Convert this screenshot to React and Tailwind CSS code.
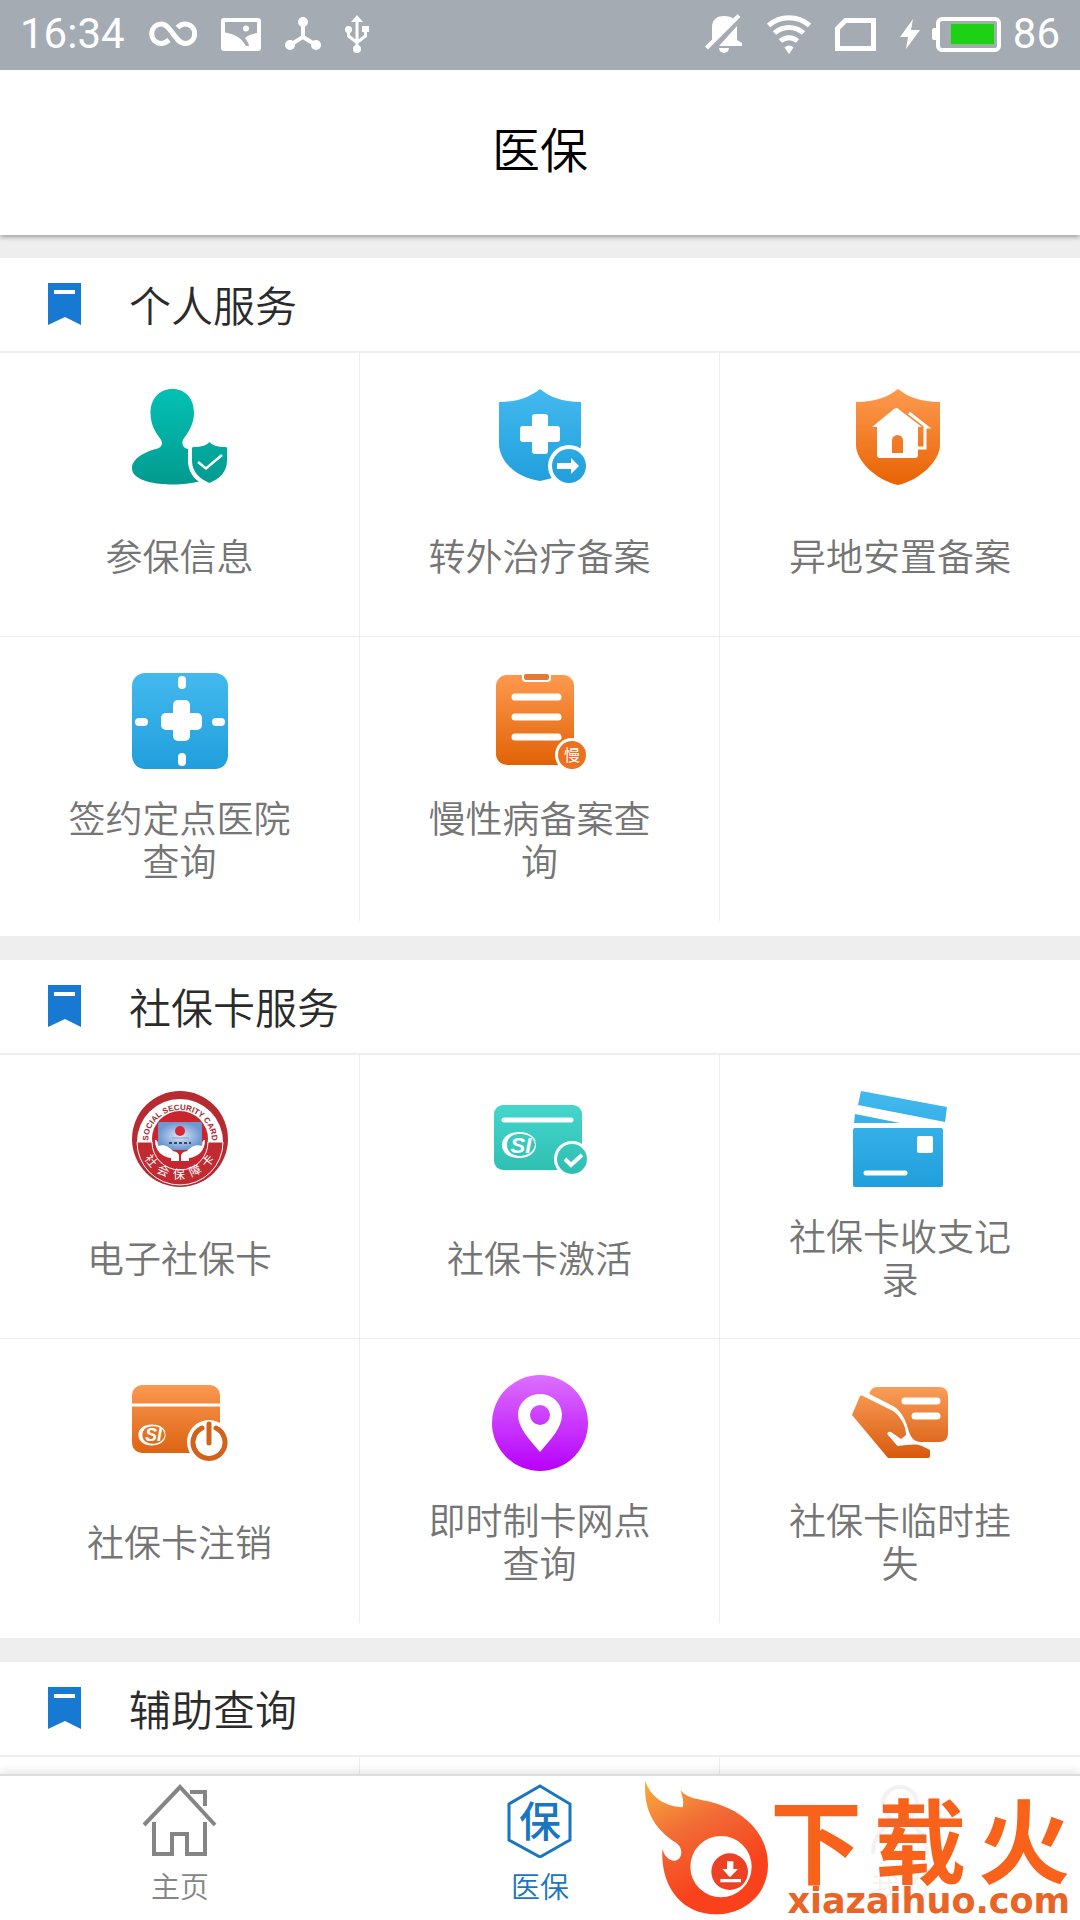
import { useState } from "react";

const SANS = "font-['Noto_Sans_CJK_SC',sans-serif]";

function StatusBar() {
  return (
    <div className="relative z-20 flex h-[70px] shrink-0 items-center justify-between bg-[#a4abb3] px-5 pb-0.5 font-[Roboto,sans-serif] text-[42px] leading-none text-white">
      <div className="flex items-center gap-6">
        <span>16:34</span>
        <svg width="48" height="26" viewBox="0 0 48 26" fill="none" stroke="currentColor" strokeWidth="5">
          <path d="M20 19C17 21.5 15 22.5 12.5 22.5A9.7 9.7 0 0 1 12.5 3C22 3 26 22.5 36 22.5A9.7 9.7 0 0 0 36 3C33 3 31 4 28.500 6.500" />
        </svg>
        <svg width="40" height="33" viewBox="0 0 40 33" fill="currentColor">
          <path fillRule="evenodd" d="M3 0H37Q40 0 40 3V30Q40 33 37 33H3Q0 33 0 30V3Q0 0 3 0ZM4 4V14.500C13 16 21 20 25 28H28C27.500 24 25 22 24 20C27 17 31 16 36 15V4ZM25 7.500A3 3 0 1 0 25 13.500A3 3 0 1 0 25 7.500Z" />
        </svg>
        <svg width="36" height="34" viewBox="0 0 36 34" fill="currentColor">
          <path d="M18 5V20L5 28M18 20L31 28" fill="none" stroke="currentColor" strokeWidth="4" />
          <circle cx="18" cy="5" r="5" />
          <circle cx="5" cy="28" r="5" />
          <circle cx="31" cy="28" r="5" />
        </svg>
        <svg width="24" height="38" viewBox="0 0 24 38" fill="currentColor">
          <path d="M12 4V34M3.500 14V21L12 27.500L20.500 21V14" fill="none" stroke="currentColor" strokeWidth="3" />
          <path d="M12 0L18 7H6Z" />
          <rect x="17" y="11" width="7" height="6" />
          <circle cx="3.500" cy="14.500" r="3.500" />
          <circle cx="12" cy="34" r="4" />
        </svg>
      </div>
      <div className="flex items-center gap-6">
        <svg width="38" height="40" viewBox="0 0 38 40" fill="currentColor">
          <path d="M7 27V13C7 5 13 2 19 2C23 2 27 3 29 5ZM14 32L32 12V26L37 29V32ZM14 34H24A5 5 0 0 1 14 34Z" />
          <path d="M1.500 34L34 1.500" stroke="currentColor" strokeWidth="4" />
        </svg>
        <svg width="44" height="39" viewBox="0 0 44 39" fill="none" stroke="currentColor" strokeWidth="5">
          <path d="M1.500 10.500C13 0 31 0 42.500 10.500M7.500 18C16 10.500 28 10.500 36.500 18M13.500 26C18.500 21.500 25.500 21.500 30.500 26" />
          <path d="M22 39L17.500 32.500Q22 28.500 26.500 32.500Z" fill="currentColor" stroke="none" />
        </svg>
        <svg width="41" height="33" viewBox="0 0 41 33" fill="none" stroke="currentColor" strokeWidth="5">
          <path d="M10.500 2.500H38.500V30.500H2.500V10.500Z" />
        </svg>
        <div className="flex items-center gap-3">
          <svg width="20" height="30" viewBox="0 0 20 30" fill="currentColor">
            <path d="M13 0L0 18H8L6 30L20 11H11Z" />
          </svg>
          <svg width="69" height="35" viewBox="0 0 69 35">
            <path d="M5 11H2Q0 11 0 13V21Q0 23 2 23H5Z" fill="#fff" />
            <rect x="6" y="2" width="61" height="31" rx="4" fill="none" stroke="#fff" strokeWidth="4" />
            <rect x="18" y="6" width="45" height="23" fill="#8fb896" />
            <rect x="19" y="7" width="43" height="20" fill="#1fd114" />
          </svg>
          <span>86</span>
        </div>
      </div>
    </div>
  );
}

// Vertical two-stop fill shared by the service icons
function Fade({ id, from, to }) {
  return (
    <defs>
      <linearGradient id={id} x1="0" y1="0" x2="0" y2="96" gradientUnits="userSpaceOnUse">
        <stop offset="0" stopColor={from} />
        <stop offset="1" stopColor={to} />
      </linearGradient>
    </defs>
  );
}

function Icon({ children }) {
  return (
    <svg className="size-24 shrink-0" viewBox="0 0 96 96" aria-hidden="true">
      {children}
    </svg>
  );
}

function SiMark() {
  return (
    <>
      <path fillRule="evenodd" fill="#fff" d="M0-13C10-13 16-8 17-3C13-9 7-11 1-11C-8-11-12-6-12 0C-12 6-8 10 0 11C8 11 15 7 16 0C15-4 14-6 12-8C16-5 17-2 17 1C16 9 9 13 0 13C-10 13-17 8-17 0C-17-8-10-13 0-13Z" />
      <text x="2" y="8" textAnchor="middle" fill="#fff" className="font-['Liberation_Sans',sans-serif] font-bold italic" fontSize="22">SI</text>
    </>
  );
}

function InsuredIcon() {
  return (
    <Icon>
      <Fade id="insured" from="#02c1b4" to="#039a8f" />
      <g fill="url(#insured)">
        <path d="M40.500 0C54 0 62 10 62 24C62 35 56 44 51.500 50C49 54 51 58 54 59.500L56 60V72C56 82 62 90 67 92.500C58 95 46 95.500 38 95.500C20 95 0 91 0 79C0 70 12 63 24 60C31 58 31 54 28.500 50C23 43 18.500 35 18.500 24C18.500 10 27 0 40.500 0Z" />
        <path d="M77.500 53C80 56 85 58 94 58L95 59V72C95 83 87 90 77.500 94C68 90 60 83 60 72V59L61 58C70 58 75 56 77.500 53Z" />
      </g>
      <path d="M66 73L74 79.500L90 66" fill="none" stroke="#fff" strokeWidth="2.500" />
    </Icon>
  );
}

function TransferIcon() {
  return (
    <Icon>
      <Fade id="transfer" from="#43b9ee" to="#209fdc" />
      <path d="M48 0C58 8 70 13 89 13V54C89 73 72 88 48 92C24 88 7 73 7 54V13C26 13 38 8 48 0Z" fill="url(#transfer)" />
      <path d="M43 25H53Q56 25 56 28V37H65Q68 37 68 40V50Q68 53 65 53H56V62Q56 65 53 65H43Q40 65 40 62V53H31Q28 53 28 50V40Q28 37 31 37H40V28Q40 25 43 25Z" fill="#fff" />
      <circle cx="77" cy="77" r="21" fill="#fff" />
      <circle cx="77" cy="77" r="17" fill="url(#transfer)" />
      <path d="M65 74H79V69L87 77L79 85V80H65Z" fill="#fff" />
    </Icon>
  );
}

function RelocateIcon() {
  return (
    <Icon>
      <Fade id="relocate" from="#fe9a50" to="#e86303" />
      <path d="M46 0C56 8 69 13 88 13V56C88 72 68 91 46 96C24 91 4 72 4 56V13C23 13 36 8 46 0Z" fill="url(#relocate)" />
      <path d="M45 19L70 38H66V66Q66 69 63 69H28Q25 69 25 66V38H20L42 20Q45 18 48 20Z" fill="#fff" />
      <path d="M57 24L75 38H73V59H66" fill="none" stroke="#fff" strokeWidth="3" />
      <path d="M40 64V51.500A5.500 5.500 0 0 1 51 51.500V64Z" fill="url(#relocate)" />
    </Icon>
  );
}

function HospitalIcon() {
  return (
    <Icon>
      <Fade id="hospital" from="#43b9ee" to="#209fdc" />
      <rect width="96" height="96" rx="13" fill="url(#hospital)" />
      <g fill="#fff">
        <rect x="29" y="40" width="41" height="17" rx="5" />
        <rect x="41" y="27" width="17" height="41" rx="5" />
        <rect x="46" y="3" width="8" height="13" rx="4" />
        <rect x="46" y="80" width="8" height="13" rx="4" />
        <rect x="3" y="45" width="13" height="8" rx="4" />
        <rect x="80" y="45" width="13" height="8" rx="4" />
      </g>
    </Icon>
  );
}

function ChronicIcon() {
  return (
    <Icon>
      <Fade id="chronic" from="#fe9a50" to="#e06003" />
      <rect x="4" y="2" width="78" height="90" rx="11" fill="url(#chronic)" />
      <rect x="31" y="0" width="27" height="8" rx="3" fill="#e27a35" stroke="#fff" strokeWidth="2" />
      <path d="M23 24H66M23 44H66M23 64H66" stroke="#fff" strokeWidth="7" strokeLinecap="round" />
      <circle cx="80" cy="82" r="17" fill="#fff" />
      <circle cx="80" cy="82" r="14" fill="#ea7120" />
      <text x="80" y="88" textAnchor="middle" fontSize="16" fill="#fff" className={SANS}>慢</text>
    </Icon>
  );
}

function SealIcon() {
  return (
    <Icon>
      <defs>
        <path id="sealArc" d="M16 51A32 32 0 0 1 80 51" />
        <radialGradient id="sealCard">
          <stop offset="0" stopColor="#dbe9f8" />
          <stop offset="1" stopColor="#6d97d0" />
        </radialGradient>
      </defs>
      <circle cx="48" cy="48" r="48" fill="#b62b31" />
      <path d="M5 51A43 43 0 0 1 91 51Z" fill="#fff" />
      <path d="M5 51A43 43 0 0 0 91 51Z" fill="#c22a31" stroke="#fff" />
      <circle cx="48" cy="48" r="28" fill="#c8252f" />
      <path d="M20 51A28 28 0 0 0 76 51" fill="none" stroke="#fff" />
      <text fontSize="8" fill="#a5262c" className="font-['Liberation_Sans',sans-serif] font-bold">
        <textPath href="#sealArc" startOffset="50%" textAnchor="middle">SOCIAL SECURITY CARD</textPath>
      </text>
      <rect x="26" y="31" width="44" height="28" rx="2" fill="url(#sealCard)" />
      <circle cx="48" cy="40" r="5" fill="#d92635" />
      <path d="M40 47H57" stroke="#8d9cb8" />
      <path d="M37 52H59" stroke="#34456e" strokeWidth="2" strokeDasharray="3 2" />
      <path d="M23 49Q26 48 26 55C33 53 37 56 41 60Q47 61 47 65V70H39V67C30 66 23 60 23 49ZM73 49Q70 48 70 55C63 53 59 56 55 60Q49 61 49 65V70H57V67C66 66 73 60 73 49Z" fill="#fff" />
      <g fontSize="12" fill="#fff" textAnchor="middle" className={SANS}>
        <text transform="translate(19 70) rotate(50)" y="4">社</text>
        <text transform="translate(31 80) rotate(24)" y="4">会</text>
        <text transform="translate(47 84)" y="4">保</text>
        <text transform="translate(63 80) rotate(-24)" y="4">障</text>
        <text transform="translate(76 70) rotate(-50)" y="4">卡</text>
      </g>
    </Icon>
  );
}

function ActivateIcon() {
  return (
    <Icon>
      <Fade id="activate" from="#49dbd1" to="#2ab9ac" />
      <rect x="2" y="14" width="88" height="65" rx="9" fill="url(#activate)" />
      <path d="M12 29H79" stroke="#fff" strokeWidth="5" strokeLinecap="round" />
      <g transform="translate(27 54)"><SiMark /></g>
      <circle cx="80" cy="68" r="18" fill="#fff" />
      <circle cx="80" cy="68" r="15" fill="url(#activate)" />
      <path d="M73 68L79 74L90 64" fill="none" stroke="#fff" strokeWidth="4" />
    </Icon>
  );
}

function RecordsIcon() {
  return (
    <Icon>
      <Fade id="records" from="#43b9ee" to="#209fdc" />
      <g fill="url(#records)">
        <path d="M9 0L95 16L93 31L6 14Z" />
        <path d="M3 23L48 32H2Z" />
        <rect x="1" y="37" width="90" height="59" rx="2" />
      </g>
      <rect x="65" y="45" width="16" height="17" rx="2" fill="#fff" />
      <path d="M14 82H53" stroke="#fff" strokeWidth="5" strokeLinecap="round" />
    </Icon>
  );
}

function CancelIcon() {
  return (
    <Icon>
      <Fade id="cancel" from="#ffa05a" to="#d45602" />
      <rect y="10" width="88" height="68" rx="10" fill="url(#cancel)" />
      <path d="M0 30H88" stroke="#fff" strokeWidth="3" />
      <g transform="translate(20 60) scale(0.8)"><SiMark /></g>
      <circle cx="77" cy="67" r="22" fill="#fff" />
      <path d="M70 53A16 16 0 1 0 84 53" fill="none" stroke="#d2611a" strokeWidth="5" strokeLinecap="round" />
      <path d="M77 49V68" stroke="#d2611a" strokeWidth="5" strokeLinecap="round" />
    </Icon>
  );
}

function BranchIcon() {
  return (
    <Icon>
      <Fade id="branch" from="#dc70ff" to="#b800fb" />
      <circle cx="48" cy="48" r="48" fill="url(#branch)" />
      <path fillRule="evenodd" fill="#fff" d="M48 19C61 19 70 29 70 40C70 53 58 65 48 77C38 65 26 53 26 40C26 29 35 19 48 19ZM48 30A10 10 0 1 0 48 50A10 10 0 1 0 48 30Z" />
    </Icon>
  );
}

function LossIcon() {
  return (
    <Icon>
      <Fade id="loss" from="#ffa966" to="#d24e00" />
      <g fill="url(#loss)">
        <path d="M17.500 19C18 15 21 12 25 12H87Q96 12 96 21V58Q96 67 87 67H68C61 66 59 62 57 57C54 46 50 36 41 31Z" />
        <path d="M8 21L0 40L36 83H76Q78 83 78 81V75L72 72C64 68 58 70 45.500 71L35.500 59.500Q35 56 39 57L49 64L54 60C54 50 48 41 41 36L12 21.500Q9.500 20 8 21Z" />
      </g>
      <path d="M53 26H85M63 41H85" stroke="#fff" strokeWidth="7" strokeLinecap="round" />
    </Icon>
  );
}

const SECTIONS = [
  {
    title: "个人服务",
    items: [
      { label: "参保信息", icon: InsuredIcon },
      { label: "转外治疗备案", icon: TransferIcon },
      { label: "异地安置备案", icon: RelocateIcon },
      { label: "签约定点医院查询", icon: HospitalIcon },
      { label: "慢性病备案查询", icon: ChronicIcon },
      null,
    ],
  },
  {
    title: "社保卡服务",
    items: [
      { label: "电子社保卡", icon: SealIcon },
      { label: "社保卡激活", icon: ActivateIcon },
      { label: "社保卡收支记录", icon: RecordsIcon },
      { label: "社保卡注销", icon: CancelIcon },
      { label: "即时制卡网点查询", icon: BranchIcon },
      { label: "社保卡临时挂失", icon: LossIcon },
    ],
  },
  { title: "辅助查询", items: [null, null, null] },
];

function ServiceCell({ item, index, total }) {
  const border = `border-[#eeeeee] ${index % 3 < 2 ? "border-r" : ""} ${index < total - 3 ? "border-b" : ""}`;

  if (!item) {
    return <div className={`min-h-[284px] ${border}`} />;
  }

  const ItemIcon = item.icon;
  return (
    <button type="button" className={`flex min-h-[284px] flex-col items-center px-14 pt-9 ${border}`}>
      <ItemIcon />
      <span className="mt-[27px] flex min-h-[86px] items-center text-[37px] leading-[43px] font-[350] text-[#757575]">
        {item.label}
      </span>
    </button>
  );
}

function ServiceSection({ title, items }) {
  return (
    <section className="shrink-0 bg-white pb-[15px]">
      <h2 className="flex h-[95px] items-center gap-12 border-b-2 border-[#eeeeee] px-12 pb-0.5 text-[42px] leading-none font-[350] text-[#2b2b2b]">
        <svg width="33" height="42" viewBox="0 0 33 42" aria-hidden="true">
          <path d="M0 0H33V42L17 34L0 42Z" fill="#1779d2" />
          <rect x="6" y="7" width="21" height="4" fill="#fff" />
        </svg>
        {title}
      </h2>
      <div className="grid grid-cols-3">
        {items.map((item, i) => (
          <ServiceCell key={i} item={item} index={i} total={items.length} />
        ))}
      </div>
    </section>
  );
}

function Watermark() {
  return (
    <div className="pointer-events-none absolute right-2.5 bottom-0 flex h-[140px] items-start">
      <svg width="128" height="135" viewBox="120 150 384 405" aria-hidden="true">
        <defs>
          <linearGradient id="flame" x1="130" y1="160" x2="300" y2="480" gradientUnits="userSpaceOnUse">
            <stop offset="0" stopColor="#fbab3c" />
            <stop offset="0.500" stopColor="#f16a35" />
            <stop offset="1" stopColor="#f9421c" />
          </linearGradient>
        </defs>
        <path d="M130 152C145 200 185 228 242 232C246 215 242 200 235 180C260 212 305 205 355 225C440 255 498 320 498 405C498 490 430 553 340 553C240 553 175 470 181 358C188 382 205 394 220 392C242 388 245 352 222 338C160 300 122 240 130 152Z" fill="url(#flame)" />
        <circle cx="357" cy="410" r="92" fill="#fff" />
        <circle cx="383" cy="425" r="55" fill="#ee4023" />
        <path d="M375 394H394V417H408L384 442L361 417H375ZM355 447H417V457H355Z" fill="#fff" />
      </svg>
      <div className="flex flex-col items-end pt-3 text-[#f8621b]">
        <span className="flex h-[90px] items-center gap-3 text-[92px] leading-none font-bold">
          <span>下</span>
          <span>载</span>
          <span>火</span>
        </span>
        <span className="font-['DejaVu_Sans',sans-serif] text-[35px] leading-[38px] font-bold text-[#ea6425]">xiazaihuo.com</span>
      </div>
    </div>
  );
}

function TabBar() {
  const [active, setActive] = useState("医保");

  const tabs = [
    {
      label: "主页",
      icon: (
        <path d="M2 41L38 3L73 41M48 8H63V22M12 38V70H30V50H45V70H63V38" strokeWidth="4" />
      ),
    },
    {
      label: "医保",
      icon: (
        <>
          <path d="M38 2L68 20V56L38 73L7 56V20Z" strokeWidth="3" />
          <text x="38" y="53" textAnchor="middle" fontSize="42" fill="currentColor" stroke="none" className="font-medium">保</text>
        </>
      ),
    },
    {
      label: "我的",
      ghost: true,
      icon: (
        <path d="M38 3A17 17 0 1 0 38 37A17 17 0 1 0 38 3ZM11 70C11 28 65 28 65 70" strokeWidth="4" />
      ),
    },
  ];

  return (
    <nav className="relative z-10 box-content grid h-[144px] shrink-0 grid-cols-3 border-t-2 border-[#dddddd] bg-white shadow-[0_-2px_10px_rgba(0,0,0,0.12)]">
      <Watermark />
      {tabs.map(({ label, icon, ghost }) => (
        <button
          key={label}
          type="button"
          onClick={() => setActive(label)}
          className={`relative flex flex-col items-center gap-3 pt-2 text-[29px] leading-[30px] font-[350] ${ghost ? "opacity-10" : ""} ${active === label ? "text-[#1a76c0]" : "text-[#858585]"}`}
        >
          <svg width="76" height="74" viewBox="0 0 76 74" fill="none" stroke="currentColor" aria-hidden="true">
            {icon}
          </svg>
          {label}
        </button>
      ))}
    </nav>
  );
}

export default function App() {
  return (
    <div className={`flex h-screen flex-col bg-[#eeeeee] ${SANS}`} lang="zh-CN">
      <StatusBar />
      <header className="relative z-10 flex h-[165px] shrink-0 items-center justify-center bg-white pb-3 shadow-[0_2px_5px_rgba(0,0,0,0.35)]">
        <h1 className="text-[48px] leading-none font-[350] text-black">医保</h1>
      </header>
      <main className="flex min-h-0 flex-1 flex-col gap-6 overflow-y-auto pt-[23px] [scrollbar-width:none]">
        {SECTIONS.map((section) => (
          <ServiceSection key={section.title} {...section} />
        ))}
      </main>
      <TabBar />
    </div>
  );
}
